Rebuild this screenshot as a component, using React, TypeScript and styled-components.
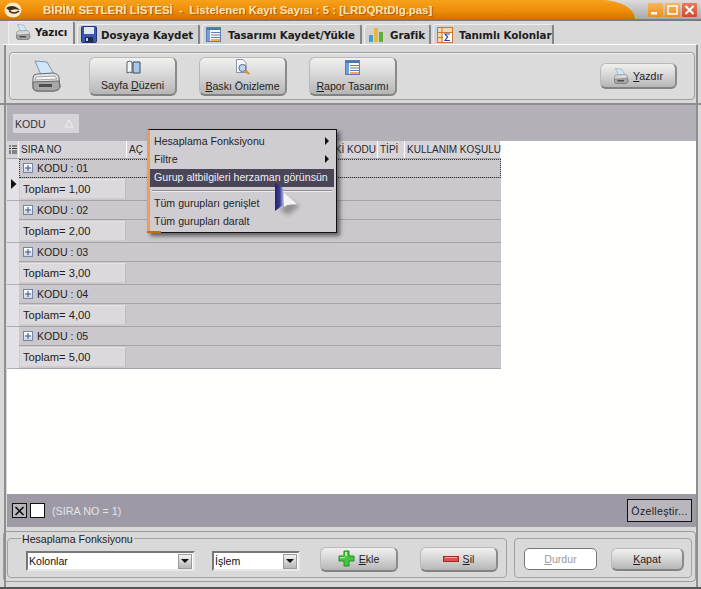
import React from "react";
import styled, { createGlobalStyle } from "styled-components";

const Global = createGlobalStyle`
  html, body { margin: 0; padding: 0; width: 701px; height: 589px; overflow: hidden; background: #d8d7d7; }
  * { box-sizing: border-box; }
  #root { width: 701px; height: 589px; }
`;
const Win = styled.div`
  width: 701px; height: 589px; display: flex; flex-direction: column; position: relative;
  background: #dad9d9; font-family: "Liberation Sans", Arial, sans-serif; font-size: 10.6px; color: #222;
  border-bottom: 2px solid #555; overflow: hidden;
  &::before { content: ""; position: absolute; left: 4px; top: 45px; bottom: 0; width: 2px; background: #8f8f8f; }
  &::after { content: ""; position: absolute; right: 3px; top: 45px; bottom: 0; width: 2px; background: #8f8f8f; }
`;
const TitleBar = styled.div`
  height: 21px; display: flex; background: linear-gradient(#dcdcdc, #a9a9a9); border-bottom: 2px solid #777c80; flex: none;
`;
const TitleShape = styled.div`
  width: 635px; display: flex; align-items: center; gap: 21px; padding-left: 4px;
  background: linear-gradient(#f7a21c, #ee8a04 60%, #cf7404);
  border-radius: 0 34px 0 0 / 0 19px 0 0;
`;
const TitleText = styled.div`
  font-weight: bold; font-size: 11.4px; color: #fde3b8; white-space: pre; text-shadow: 1px 1px 0 #b66000;
  margin-top: 1px;
`;
const WinBtns = styled.div`
  display: flex; gap: 2px; margin-left: 13px; padding-top: 3px;
`;
const WinBtn = styled.div<{ $c: string }>`
  width: 15px; height: 14px; border-radius: 1px; background: ${(p) => p.$c}; display: flex; align-items: center; justify-content: center;
`;
const TabStrip = styled.div`
  height: 24px; display: flex; align-items: flex-end; padding: 0 0 0 5px; gap: 2px; flex: none; border-bottom: 1px solid #fff;
  margin-left: 3px; margin-right: 5px;
`;
const Tab = styled.div<{ $active?: boolean; $w: number; $gap?: number }>`
  width: ${(p) => p.$w}px;
  height: ${(p) => (p.$active ? 23 : 20)}px; display: flex; align-items: center; gap: ${(p) => p.$gap ?? 6}px;
  padding: ${(p) => (p.$active ? "0 0 3px 6px" : "0 0 0 3px")};
  background: ${(p) => (p.$active ? "#e1e0e0" : "#d3d2d2")};
  border: 1px solid #9b9b9b; border-bottom: none; border-radius: 3px 3px 0 0;
  border-right: 2px solid #858585; border-top-color: #eee; border-left-color: #eee;
  font-family: "DejaVu Sans", Verdana, sans-serif; font-weight: bold; font-size: 10.3px; letter-spacing: -.05px; color: #1c1c1c; white-space: pre;
  flex: none;
`;
const ToolOuter = styled.div`
  height: 60px; flex: none; padding: 7px 6px 3px 9px;
  border-bottom: 2px solid #8f8f8f;
`;
const ToolFrame = styled.div`
  height: 48px; border: 1px solid #9e9e9e; border-radius: 4px; display: flex; align-items: center;
  background: #dcdbdb; padding-left: 20px; position: relative; box-shadow: inset 1px 1px 0 #f1f1f1;
`;
const ToolBtn = styled.div<{ $w?: number; $h?: number; $ml?: number; $mr?: number }>`
  width: ${(p) => p.$w ?? 88}px; height: ${(p) => p.$h ?? 39}px; margin-left: ${(p) => p.$ml ?? 22}px; margin-right: ${(p) => p.$mr ?? 0}px;
  border-radius: 6px; flex: none; display: flex; flex-direction: column; align-items: center; justify-content: center; gap: 5px;
  background: linear-gradient(#f0f0ef, #d9d8d8 45%, #b7b6b6);
  border: 1px solid #b9b9b9; border-right: 2px solid #8a8a8a; border-bottom: 2px solid #828282;
  color: #1e1e1e; font-size: 10.6px; white-space: pre; flex-shrink: 0;
`;
const RowBtn = styled(ToolBtn)`
  flex-direction: row; gap: 4px;
`;
const U = styled.span`text-decoration: underline;`;
const Spacer = styled.div`flex: 1;`;
const GroupBand = styled.div`
  height: 36px; flex: none; background: #b3b0b8; margin: 0 5px 0 7px; padding: 9px 0 0 6px; 
`;
const Chip = styled.div`
  width: 66px; height: 19px; background: #d6d4d9; display: flex; align-items: center; justify-content: space-between;
  padding: 0 5px 0 2px; font-size: 10.6px; color: #333;
`;
const GridArea = styled.div`
  flex: 1; background: #fffffd; margin: 0 5px 0 7px; min-height: 0;
`;
const Table = styled.div`
  width: 494px; 
`;
const HeadRow = styled.div`
  height: 18px; display: flex; background: #d6d4d9; border-bottom: 1px solid #a5a3a8;
`;
const HeadCell = styled.div<{ $w: number; $end?: boolean }>`
  width: ${(p) => p.$w}px; flex: none; display: flex; align-items: center; padding: 0 1px 0 2px; white-space: pre;
  justify-content: ${(p) => (p.$end ? "flex-end" : "flex-start")};
  border-right: 1px solid #fff; font-size: 10px; color: #2a2a2a;
`;
const Block = styled.div`
  display: flex; height: 42px; position: relative;
`;
const Indicator = styled.div`
  width: 12px; flex: none; background: #e3e1e5; border-bottom: 1px solid #b0aeb3; display: flex; align-items: center;
  padding: 8px 0 0 4px;
`;
const BlockBody = styled.div`
  flex: 1; display: flex; flex-direction: column; background: #cbc8cd;
`;
const GroupRow = styled.div<{ $focus?: boolean }>`
  height: 19px; display: flex; align-items: center; gap: 4px; padding-left: 4px; font-size: 10.6px; color: #222;
  border-bottom: 1px solid #a5a3a8;
  outline: ${(p) => (p.$focus ? "1px dotted #333" : "none")}; outline-offset: -1px;
`;
const Plus = styled.div`
  width: 10px; height: 10px; border: 1px solid #7286a8; background: linear-gradient(#fff, #cfd5e4); position: relative; flex: none;
  &::before { content: ""; position: absolute; left: 1px; right: 1px; top: 3px; height: 2px; background: #3a4f85; transform: scaleY(.5); }
  &::after { content: ""; position: absolute; top: 1px; bottom: 1px; left: 3px; width: 2px; background: #3a4f85; transform: scaleX(.5); }
`;
const FooterRow = styled.div`
  flex: 1; border-bottom: 1px solid #a5a3a8; display: flex; align-items: center;
`;
const Total = styled.div`
  width: 107px; height: 20px; background: #dbd9dc; border: 1px solid #cfcdd0; border-top-color: #e6e4e6; border-right-color: #bdbbc0; display: flex; align-items: center; padding-left: 3px;
  font-size: 11.2px; color: #222;
`;
const StatusBand = styled.div`
  height: 33px; flex: none; background: #9d99a5; margin: 0 5px 0 7px; display: flex; align-items: center; padding: 0 4px 0 5px; gap: 3px;
`;
const Box = styled.div<{ $fill?: string }>`
  width: 15px; height: 15px; border: 1px solid #111; background: ${(p) => p.$fill ?? "#fff"}; flex: none;
  display: flex; align-items: center; justify-content: center;
`;
const StatusText = styled.div`
  color: #e6e4ea; font-size: 10.8px; margin-left: 4px; flex: 1;
`;
const CustomBtn = styled.div`
  width: 65px; height: 23px; background: #b9b6be; border: 1px solid #111; display: flex; align-items: center; justify-content: center;
  font-size: 10.6px; color: #222; letter-spacing: .3px;
`;
const BottomPanel = styled.div`
  height: 51px; flex: none; margin: 4px 5px 5px 3px; border: 1px solid #9c9c9c; border-radius: 4px; display: flex; gap: 7px; padding: 6px 3px 3px 3px;
`;
const Group = styled.div<{ $w: number }>`
  width: ${(p) => p.$w}px; height: 40px; border: 1px solid #a3a3a3; border-radius: 4px; position: relative; flex: none;
  display: flex; align-items: center; padding-top: 2px;
`;
const Legend = styled.div`
  position: absolute; left: 13px; top: -5px; background: #dad9d9; padding: 0 1px; font-size: 10.6px; line-height: 11px; color: #222; white-space: pre;
`;
const Combo = styled.div<{ $w: number; $ml: number }>`
  width: ${(p) => p.$w}px; height: 20px; margin: 4px 0 0 ${(p) => p.$ml}px; flex: none; background: #fff; display: flex; align-items: center; justify-content: space-between;
  border: 2px solid #777; border-right-color: #e8e8e8; border-bottom-color: #e8e8e8; padding-left: 1px; font-size: 10.6px; color: #111; padding-right: 1px;
`;
const ComboBtn = styled.div`
  width: 14px; height: 15px; background: linear-gradient(#f3f3f3, #b5b5b5); border: 1px solid #999; display: flex; align-items: center; justify-content: center;
  &::after { content: ""; border: 4px solid transparent; border-top: 4px solid #111; border-bottom: 0; }
`;
const DisabledBtn = styled.div`
  width: 73px; height: 22px; margin-left: 9px; background: #fff; border: 1px solid #777; border-radius: 5px; display: flex; align-items: center; justify-content: center;
  color: #9b9b9b; font-size: 10.6px; flex: none;
`;
const Menu = styled.div`
  position: absolute; left: 147px; top: 129px; width: 190px; height: 104px; background: #d0cdd2;
  border: 1px solid #111; border-left: 3px solid #ed9d58; padding: 3px 2px 0 0; z-index: 5;
  box-shadow: 3px 3px 4px rgba(40,40,40,.65);
  &::before { content: ""; position: absolute; left: -3px; bottom: -1px; width: 14px; height: 2px; background: #c96d12; }
`;
const Item = styled.div<{ $hi?: boolean }>`
  height: 18px; display: flex; align-items: center; justify-content: space-between; padding: 0 5px 2px 4px;
  background: ${(p) => (p.$hi ? "#4a4658" : "transparent")}; color: ${(p) => (p.$hi ? "#f0eef5" : "#1f1f1f")};
  font-size: 10.6px; white-space: pre;
`;
const Arrow = styled.div`
  width: 0; height: 0; border: 4px solid transparent; border-left: 4px solid #111; border-right: 0;
`;
const Sep = styled.div`
  height: 1px; background: #8f8d92; margin: 3px 2px 4px 2px; box-shadow: 0 1px 0 #eee;
`;
const Cursor = styled.svg`
  position: absolute; left: 274px; top: 182px; z-index: 6;
`;

const PrinterIcon = ({ s = 32 }: { s?: number }) => (
  <svg width={s} height={s} viewBox="0 0 32 32">
    <path d="M5 1 L17 2 L24 14 L11 15 Z" fill="#cfe6f8" stroke="#8096a8" />
    <path d="M3 18 Q3 14 7 14 L23 13 Q29 14 29 18 L30 27 Q29 31 24 31 L8 31 Q3 31 3 27 Z" fill="#e4e4e4" stroke="#6a6a6a" />
    <path d="M6 17 L25 16 L27 19 L5 20 Z" fill="#fafafa" stroke="#a2a2a2" />
    <path d="M3 22 L29 21 L30 27 Q29 31 24 31 L8 31 Q3 31 3 27 Z" fill="#a7a7a7" stroke="#666" />
    <rect x="9" y="24" width="13" height="3" fill="#4e4e4e" />
  </svg>
);
const Floppy = () => (
  <svg width="16" height="17" viewBox="0 0 16 17">
    <rect x="0.5" y="0.5" width="15" height="16" rx="1" fill="#3b55b8" stroke="#24347c" />
    <rect x="3" y="1" width="10" height="7" fill="#dfe8f8" />
    <rect x="4" y="11" width="8" height="5" fill="#20283f" />
    <rect x="5" y="12" width="2" height="3" fill="#c8d0e0" />
  </svg>
);
const ListIcon = () => (
  <svg width="15" height="15" viewBox="0 0 15 15">
    <rect x="0.5" y="0.5" width="14" height="14" fill="#fbfaf0" stroke="#5a7fb8" />
    <rect x="1" y="1" width="3" height="13" fill="#6f9fdc" />
    <rect x="1" y="1" width="13" height="2" fill="#4a76b8" />
    <path d="M5 5.5h9M5 8h9M5 10.500h9" stroke="#5f7fa8" strokeWidth="1" />
    <rect x="5" y="12" width="9" height="2" fill="#eab24a" />
  </svg>
);
const Chart = () => (
  <svg width="16" height="16" viewBox="0 0 16 16">
    <rect x="1" y="8" width="4" height="7" fill="#3c9fd8" />
    <rect x="6" y="1" width="4" height="14" fill="#e8b93a" />
    <rect x="11" y="5" width="4" height="10" fill="#5fae3d" />
  </svg>
);
const Sigma = () => (
  <svg width="16" height="16" viewBox="0 0 16 16">
    <rect x="0.5" y="0.5" width="15" height="15" fill="#f6d9a8" stroke="#d0752a" />
    <path d="M0 5.5h16M0 10.5h16M5 0v16" stroke="#d0752a" />
    <rect x="6" y="6" width="9" height="9" fill="#fff" />
    <path d="M13 7H8l2.6 3L8 13.5h5" fill="none" stroke="#2a46a0" strokeWidth="1.2" />
  </svg>
);
const PageLayout = () => (
  <svg width="16" height="14" viewBox="0 0 16 14">
    <path d="M2 2 Q5 0 7 2 V13 Q5 11 2 13 Z" fill="#f6f6f6" stroke="#56606d" />
    <path d="M8 2 H15 V13 H8Z" fill="#a6c8ea" stroke="#3f4b5b" />
  </svg>
);
const Preview = () => (
  <svg width="15" height="16" viewBox="0 0 15 16">
    <path d="M1.500 .5 H8 L11 3.500 V13.500 H1.500Z" fill="#f6f8fc" stroke="#8a93a0" />
    <circle cx="7.500" cy="9" r="3.600" fill="#bcd4ee" stroke="#5d6a7c" />
    <path d="M10.500 11.500 L14 15" stroke="#d98a20" strokeWidth="2" />
  </svg>
);
const PlusIcon = () => (
  <svg width="17" height="17" viewBox="0 0 17 17">
    <path d="M6 1h5v5h5v5h-5v5H6v-5H1V6h5Z" fill="#43c83d" stroke="#2b8a2a" />
    <path d="M7 2h2v4H7zM2 7h5v1H2z" fill="#b6f0a9" />
  </svg>
);
const MinusIcon = () => (
  <svg width="16" height="6" viewBox="0 0 16 6">
    <rect x="0.5" y="0.5" width="15" height="5" fill="#e05247" stroke="#8e2f28" />
    <rect x="2" y="1" width="12" height="1" fill="#f4a69f" />
  </svg>
);
const IndicatorLines = () => (
  <svg width="8" height="9" viewBox="0 0 8 9">
    <path d="M0 1h2M3 1h5M0 3.500h2M3 3.500h5M0 6h2M3 6h5M0 8h2M3 8h5" stroke="#333" />
  </svg>
);
const RowArrow = () => (
  <svg width="6" height="10" viewBox="0 0 6 10"><path d="M0 0 L5.500 5 L0 10Z" fill="#111" /></svg>
);
const Logo = () => (
  <svg width="18" height="16" viewBox="0 0 18 16">
    <ellipse cx="9" cy="8" rx="8.500" ry="7.500" fill="#fbe9c8" />
    <path d="M2 6 Q9 1 16 8 Q9 6 6 9 Z" fill="#402a18" />
    <path d="M5 9 Q10 13 15 9" fill="none" stroke="#402a18" strokeWidth="1.500" />
  </svg>
);
const MinGlyph = () => (
  <svg width="11" height="10" viewBox="0 0 11 10"><rect x="1" y="7" width="6" height="2.500" fill="#fff" /></svg>
);
const MaxGlyph = () => (
  <svg width="11" height="10" viewBox="0 0 11 10"><rect x="1" y="1" width="9" height="8" fill="none" stroke="#fff" strokeWidth="1.500" /></svg>
);
const XGlyph = ({ c = "#fff", w = 2 }: { c?: string; w?: number }) => (
  <svg width="11" height="10" viewBox="0 0 11 10"><path d="M1.500 1 L9.500 9 M9.500 1 L1.500 9" stroke={c} strokeWidth={w} /></svg>
);

const rows = ["01", "02", "03", "04", "05"];

export default function App() {
  return (
    <Win>
      <Global />
      <TitleBar>
        <TitleShape>
          <Logo />
          <TitleText>BİRİM SETLERİ LİSTESİ  -  Listelenen Kayıt Sayısı : 5 : [LRDQRtDlg.pas]</TitleText>
        </TitleShape>
        <WinBtns>
          <WinBtn $c="linear-gradient(#fbb45c,#ee8f1c)"><MinGlyph /></WinBtn>
          <WinBtn $c="linear-gradient(#fbb45c,#ee8f1c)"><MaxGlyph /></WinBtn>
          <WinBtn $c="linear-gradient(#ee7a62,#d2482c)"><XGlyph /></WinBtn>
        </WinBtns>
      </TitleBar>
      <TabStrip>
        <Tab $active $w={67} $gap={4}><PrinterIcon s={16} />Yazıcı</Tab>
        <Tab $w={123} $gap={4}><Floppy />Dosyaya Kaydet</Tab>
        <Tab $w={160} $gap={7}><ListIcon />Tasarımı Kaydet/Yükle</Tab>
        <Tab $w={67}><Chart />Grafik</Tab>
        <Tab $w={121}><Sigma />Tanımlı Kolonlar</Tab>
      </TabStrip>
      <ToolOuter>
        <ToolFrame>
          <PrinterIcon />
          <ToolBtn $ml={27}><PageLayout /><span>Sayfa <U>D</U>üzeni</span></ToolBtn>
          <ToolBtn><Preview /><span><U>B</U>askı Önizleme</span></ToolBtn>
          <ToolBtn><ListIcon /><span><U>R</U>apor Tasarımı</span></ToolBtn>
          <Spacer />
          <RowBtn $w={77} $h={26} $ml={0} $mr={17}><PrinterIcon s={16} /><span><U>Y</U>azdır</span></RowBtn>
        </ToolFrame>
      </ToolOuter>
      <GroupBand>
        <Chip>KODU<svg width="10" height="9" viewBox="0 0 10 9"><path d="M5 1 L9 8 H1Z" fill="none" stroke="#f1f0f3" /></svg></Chip>
      </GroupBand>
      <GridArea>
        <Table>
          <HeadRow>
            <HeadCell $w={12}><IndicatorLines /></HeadCell>
            <HeadCell $w={108}>SIRA NO</HeadCell>
            <HeadCell $w={60}>AÇ</HeadCell>
            <HeadCell $w={191} $end>Kİ KODU</HeadCell>
            <HeadCell $w={27}>TİPİ</HeadCell>
            <HeadCell $w={96}>KULLANIM KOŞULU</HeadCell>
          </HeadRow>
          {rows.map((r, i) => (
            <Block key={r}>
              <Indicator>{i === 0 && <RowArrow />}</Indicator>
              <BlockBody>
                <GroupRow $focus={i === 0}><Plus />KODU : {r}</GroupRow>
                <FooterRow><Total>Toplam= {i + 1},00</Total></FooterRow>
              </BlockBody>
            </Block>
          ))}
        </Table>
      </GridArea>
      <StatusBand>
        <Box $fill="#b9b6be"><XGlyph c="#111" w={1.6} /></Box>
        <Box />
        <StatusText>(SIRA NO = 1)</StatusText>
        <CustomBtn>Özelleştir...</CustomBtn>
      </StatusBand>
      <BottomPanel>
        <Group $w={500}>
          <Legend>Hesaplama Fonksiyonu</Legend>
          <Combo $w={169} $ml={18}>Kolonlar<ComboBtn /></Combo>
          <Combo $w={88} $ml={17}>İşlem<ComboBtn /></Combo>
          <RowBtn $w={78} $h={25} $ml={20}><PlusIcon /><span><U>E</U>kle</span></RowBtn>
          <RowBtn $w={78} $h={25} $ml={22}><MinusIcon /><span><U>S</U>il</span></RowBtn>
        </Group>
        <Group $w={178}>
          <DisabledBtn><span><U>D</U>urdur</span></DisabledBtn>
          <RowBtn $w={73} $h={23} $ml={14}><span><U>K</U>apat</span></RowBtn>
        </Group>
      </BottomPanel>
      <Menu>
        <Item>Hesaplama Fonksiyonu<Arrow /></Item>
        <Item>Filtre<Arrow /></Item>
        <Item $hi>Gurup altbilgileri herzaman görünsün</Item>
        <Sep />
        <Item>Tüm gurupları genişlet</Item>
        <Item>Tüm gurupları daralt</Item>
      </Menu>
      <Cursor width="32" height="36" viewBox="0 0 32 36">
        <defs>
          <linearGradient id="cg" x1="0" x2="1" y1="0" y2="0">
            <stop offset="0" stopColor="#23236a" />
            <stop offset="0.6" stopColor="#3b3b98" />
            <stop offset="1" stopColor="#a6a6d0" />
          </linearGradient>
        </defs>
        <path d="M6 28 L14 18 L26 24 L14 33 Z" fill="#222" opacity=".35" style={{ filter: "blur(2px)" }} />
        <path d="M10 11 L23 22 L13 23 L10 25 Z" fill="#f4f4f4" />
        <path d="M1 1 L9 6 L9 23 L1 29 Z" fill="url(#cg)" />
      </Cursor>
    </Win>
  );
}
